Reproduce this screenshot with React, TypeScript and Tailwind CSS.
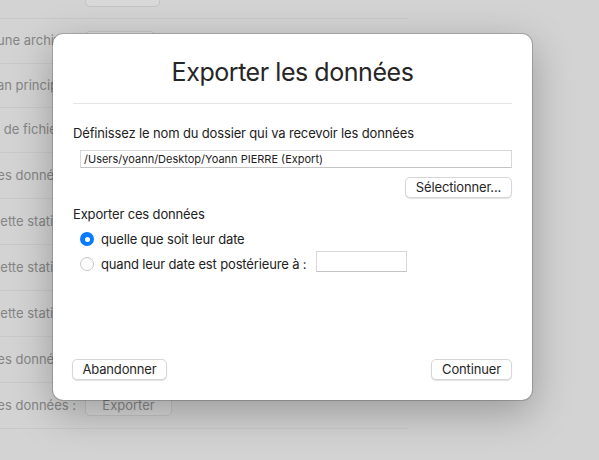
const font = { fontFamily: "Inter, 'Liberation Sans', sans-serif" };

type Row = { label: string; button?: string; width?: string; h: string };

const rows: Row[] = [
  { label: "Contenu initial :", button: "Débuter", width: "w-[75px]", h: "h-[45px]" },
  { label: "Créer une archive :", button: "Créer", width: "w-[70px]", h: "h-[45px]" },
  { label: "Écran principal :", button: "Choisir", width: "w-[70px]", h: "h-[44px]" },
  { label: "Liste de fichiers :", button: "Ouvrir", width: "w-[70px]", h: "h-[45px]" },
  { label: "Importer des données :", button: "Importer", width: "w-[80px]", h: "h-[46px]" },
  { label: "Activer cette station :", button: "Activer", width: "w-[75px]", h: "h-[46px]" },
  { label: "Nommer cette station :", button: "Nommer", width: "w-[75px]", h: "h-[46px]" },
  { label: "Retirer cette station :", button: "Retirer", width: "w-[75px]", h: "h-[46px]" },
  { label: "Effacer les données :", button: "Effacer", width: "w-[75px]", h: "h-[46px]" },
  { label: "Exporter les données :", button: "Exporter", width: "w-[87px]", h: "h-[46px]" },
];

function DialogButton({ children, className = "" }: { children: React.ReactNode; className?: string }) {
  return (
    <button
      className={`h-[21px] rounded-[5px] border border-[#d6d6d6] bg-white text-[13px] leading-none tracking-[-0.15px] text-[#262626] shadow-[0_1px_1px_rgba(0,0,0,0.12)] ${className}`}
    >
      {children}
    </button>
  );
}

export default function App() {
  return (
    <div
      className="relative h-[460px] w-[599px] overflow-hidden bg-[#d3d3d3]"
      style={font}
    >
      {/* settings rows behind the sheet */}
      <div className="mt-[-26px] flex w-[408px] flex-col">
        {rows.map((r) => (
          <div
            key={r.label}
            className={`flex ${r.h} shrink-0 items-center border-b border-[#c9c9c9]`}
          >
            <div className="w-[76px] shrink-0 overflow-hidden whitespace-nowrap text-right text-[13px] text-[#858585]">
              <span className="float-right">{r.label}</span>
            </div>
            {r.button && (
              <div
                className={`ml-[9px] flex h-[21px] ${r.width} items-center justify-center rounded-[5px] border border-[#c4c4c4] bg-[#d9d9d9] text-[13px] text-[#8a8a8a]`}
              >
                {r.button}
              </div>
            )}
          </div>
        ))}
      </div>

      {/* export sheet */}
      <div className="absolute left-[53px] top-[34px] flex h-[366px] w-[479px] flex-col rounded-[10px] bg-white px-[20px] pb-[20px] pt-[22px] tracking-[-0.15px] shadow-[0_12px_40px_rgba(0,0,0,0.28),0_0_0_1px_rgba(0,0,0,0.18)]">
        <h1 className="text-center text-[25px] leading-[32px] tracking-[-0.45px] text-[#262626]">
          Exporter les données
        </h1>
        <div className="mt-[15px] h-px bg-[#e6e6e6]" />

        <p className="mt-[21px] text-[13px] leading-[16px] text-[#222]">
          Définissez le nom du dossier qui va recevoir les données
        </p>
        <div className="ml-[7px] mt-[9px] flex h-[18px] items-center border border-[#d8d8d8] border-b-[#c4c4c4] px-[3px] text-[11px] tracking-normal text-[#222]">
          /Users/yoann/Desktop/Yoann PIERRE (Export)
        </div>
        <div className="mt-[9px] flex justify-end">
          <DialogButton className="w-[107px]">Sélectionner...</DialogButton>
        </div>

        <p className="mt-[8px] text-[13px] leading-[16px] text-[#222]">
          Exporter ces données
        </p>
        <div className="ml-[7px] mt-[9px] flex items-center gap-[7px] text-[13px] leading-[16px] text-[#222]">
          <span className="flex h-[14px] w-[14px] items-center justify-center rounded-full bg-[#0a7aff]">
            <span className="h-[5px] w-[5px] rounded-full bg-white" />
          </span>
          quelle que soit leur date
        </div>
        <div className="ml-[7px] mt-[4px] flex items-end text-[13px] leading-[16px] text-[#222]">
          <span className="mb-px mr-[7px] h-[14px] w-[14px] rounded-full border border-[#c8c8c8] bg-white shadow-[inset_0_1px_1px_rgba(0,0,0,0.05)]" />
          quand leur date est postérieure à :
          <div className="ml-[10px] h-[21px] w-[91px] border border-[#d8d8d8] border-b-[#c4c4c4]" />
        </div>

        <div className="mt-auto flex justify-between">
          <DialogButton className="-ml-px w-[95px]">Abandonner</DialogButton>
          <DialogButton className="w-[81px]">Continuer</DialogButton>
        </div>
      </div>
    </div>
  );
}
